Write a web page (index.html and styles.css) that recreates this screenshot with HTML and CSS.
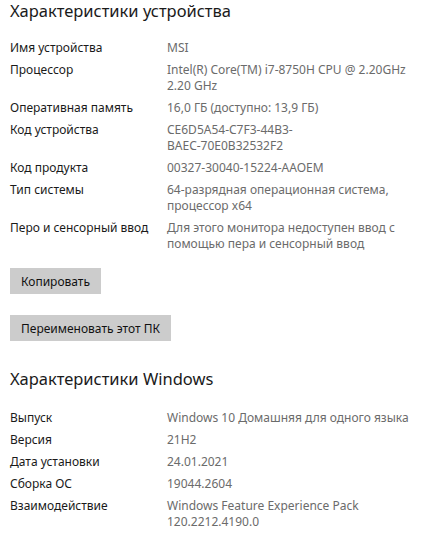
FILE: index.html
```html
<!DOCTYPE html>
<html lang="ru">
<head>
  <meta charset="UTF-8"/>
  <meta name="viewport" content="width=device-width, initial-scale=1.0"/>
  <title>О системе</title>
  <link rel="stylesheet" href="styles.css">
</head>
<body>
  <div class="page">
    <h1>Характеристики устройства</h1>

    <div class="specs">
      <div class="row"><span class="key">Имя устройства</span><span class="val">MSI</span></div>
      <div class="row"><span class="key">Процессор</span><span class="val">Intel(R) Core(TM) i7-8750H CPU @ 2.20GHz<br>2.20 GHz</span></div>
      <div class="row"><span class="key">Оперативная память</span><span class="val">16,0 ГБ (доступно: 13,9 ГБ)</span></div>
      <div class="row"><span class="key">Код устройства</span><span class="val">CE6D5A54-C7F3-44B3-<br>BAEC-70E0B32532F2</span></div>
      <div class="row"><span class="key">Код продукта</span><span class="val">00327-30040-15224-AAOEM</span></div>
      <div class="row"><span class="key">Тип системы</span><span class="val">64-разрядная операционная система,<br>процессор x64</span></div>
      <div class="row"><span class="key">Перо и сенсорный ввод</span><span class="val">Для этого монитора недоступен ввод с<br>помощью пера и сенсорный ввод</span></div>
    </div>

    <button class="btn copy-btn">Копировать</button>
    <button class="btn">Переименовать этот ПК</button>

    <h1 class="win-title">Характеристики Windows</h1>

    <div class="specs win-specs">
      <div class="row"><span class="key">Выпуск</span><span class="val">Windows 10 Домашняя для одного языка</span></div>
      <div class="row"><span class="key">Версия</span><span class="val">21H2</span></div>
      <div class="row"><span class="key">Дата установки</span><span class="val">24.01.2021</span></div>
      <div class="row"><span class="key">Сборка ОС</span><span class="val">19044.2604</span></div>
      <div class="row"><span class="key">Взаимодействие</span><span class="val">Windows Feature Experience Pack<br>120.2212.4190.0</span></div>
    </div>
  </div>
</body>
</html>
```

FILE: styles.css
```css
body {
  margin: 0;
  padding: 0;
  background-color: #ffffff;
  font-family: 'Noto Sans', 'Open Sans', sans-serif;
  color: #1a1a1a;
}

.page {
  padding: 0 10px;
}

h1 {
  font-size: 16.5px;
  font-weight: 400;
  line-height: 22px;
  margin: 0;
  color: #1a1a1a;
}

.specs {
  display: flex;
  flex-direction: column;
  gap: 6px;
  margin-top: 18px;
}

.win-specs {
  margin-top: 20px;
}

.row {
  display: flex;
  font-size: 12px;
  line-height: 16px;
}

.key {
  width: 157px;
  flex-shrink: 0;
  color: #1a1a1a;
}

.val {
  color: #6b6b6b;
}

.btn {
  display: block;
  background-color: #cccccc;
  border: none;
  font-family: inherit;
  font-size: 12px;
  color: #111;
  height: 26px;
  padding: 0 11px;
  cursor: pointer;
}

.copy-btn {
  margin-top: 16px;
  margin-bottom: 21px;
}

.win-title {
  margin-top: 27px;
}
```
